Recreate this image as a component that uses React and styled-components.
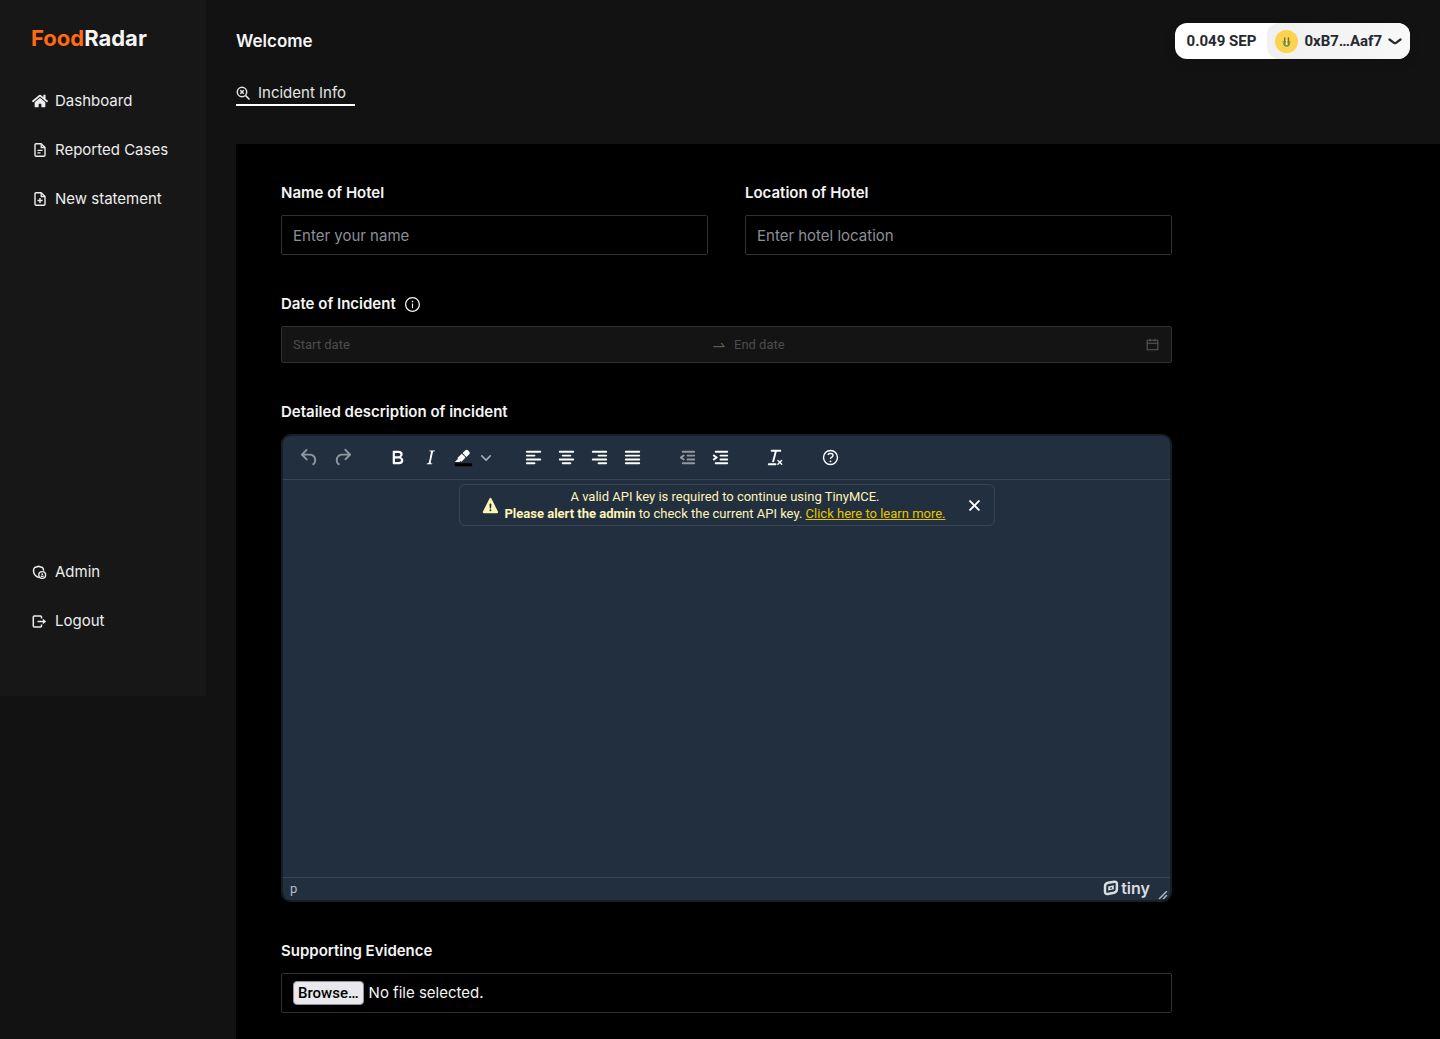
import React from "react";
import styled, { createGlobalStyle, css } from "styled-components";
import { FaHome } from "react-icons/fa";
import { AiOutlineInfoCircle, AiOutlineCalendar, AiOutlineSwapRight } from "react-icons/ai";

const GlobalStyle = createGlobalStyle`
  *, *::before, *::after { box-sizing: border-box; }
  body {
    margin: 0;
    background: #121212;
    color: #f5f5f5;
    font-family: Inter, "Liberation Sans", sans-serif;
    font-size: 15px;
    line-height: 24px;
  }
  button, input, textarea { font: inherit; color: inherit; }
  h1, h2, p { margin: 0; }
`;

const Page = styled.div`
  display: flex;
  align-items: flex-start;
  min-height: 100vh;
`;

const Sidebar = styled.aside`
  flex: 0 0 206px;
  display: flex;
  flex-direction: column;
  justify-content: space-between;
  height: 67vh;
  min-height: 480px;
  padding: 22px 31px 63px;
  background: #171717;
`;

const Brand = styled.h1`
  font-size: 22px;
  font-weight: 700;
  line-height: 32px;
  span { color: #ff6a13; }
`;

const Nav = styled.nav`
  display: flex;
  flex-direction: column;
  gap: 25px;
  margin-top: ${(p) => (p.$top ? "35px" : "0")};
`;

const NavLink = styled.a`
  display: flex;
  align-items: center;
  gap: 7px;
  color: #ededed;
  text-decoration: none;
  white-space: nowrap;
`;

const NavIcon = styled.span`
  flex: none;
  display: flex;
  justify-content: center;
  width: 17px;
`;

const Main = styled.main`
  flex: 1;
  min-width: 0;
  min-height: 100vh;
  display: flex;
  flex-direction: column;
  padding-left: 30px;
`;

const Header = styled.header`
  display: flex;
  justify-content: space-between;
  align-items: center;
  padding: 23px 30px 0 0;
`;

const Title = styled.h2`
  font-size: 17px;
  font-weight: 600;
  line-height: 24px;
`;

const Wallet = styled.button`
  display: flex;
  align-items: stretch;
  height: 36px;
  padding: 0;
  border: 0;
  border-radius: 12px;
  overflow: hidden;
  background: #fff;
  color: #25292e;
  font-family: Roboto, "Liberation Sans", sans-serif;
  font-size: 15px;
  font-weight: 700;
  box-shadow: 0 4px 12px rgba(0, 0, 0, 0.1);
`;

const Balance = styled.span`
  display: flex;
  align-items: center;
  padding: 0 11px 0 12px;
`;

const Account = styled.span`
  display: flex;
  align-items: center;
  gap: 6px;
  padding: 0 8px;
  border-radius: 12px;
  background: linear-gradient(90deg, #f0f0f1, #f8f8f8);
`;

const Tabs = styled.nav`
  display: flex;
  margin: 23px 0 38px;
`;

const Tab = styled.a`
  display: flex;
  align-items: center;
  gap: 7px;
  padding-right: 9px;
  border-bottom: 2px solid #fff;
  color: #e4e4e4;
  line-height: 22px;
  text-decoration: none;
`;

const Panel = styled.section`
  flex: 1;
  padding: 37px 45px 26px;
  background: #000;
`;

const Form = styled.form`
  display: flex;
  flex-direction: column;
  gap: 37px;
  max-width: 891px;
`;

const Pair = styled.div`
  display: grid;
  grid-template-columns: 1fr 1fr;
  gap: 37px;
`;

const Field = styled.div`
  display: flex;
  flex-direction: column;
  gap: 10px;
  min-width: 0;
`;

const Label = styled.label`
  display: flex;
  align-items: center;
  gap: 8px;
  font-weight: 600;
  svg { width: 17px; height: 17px; }
`;

const box = css`
  width: 100%;
  border: 1px solid #303030;
  border-radius: 2px;
`;

const TextInput = styled.input`
  ${box}
  height: 40px;
  padding: 0 11px;
  background: #000;
  outline: none;
  &::placeholder { color: #8b8f98; opacity: 1; }
`;

const DateRange = styled.div`
  ${box}
  display: flex;
  align-items: center;
  height: 37px;
  padding: 0 11px;
  background: #141414;
  color: #5a5a5a;
  font-family: Roboto, "Liberation Sans", sans-serif;
  font-size: 13px;
  svg { flex: none; }
`;

const DateInput = styled.input`
  flex: 1;
  min-width: 0;
  padding: 0;
  border: 0;
  background: transparent;
  outline: none;
  &::placeholder { color: #4c4c4c; opacity: 1; }
`;

const Arrow = styled.span`
  display: flex;
  padding: 0 7px;
`;

const Editor = styled.div`
  display: flex;
  flex-direction: column;
  height: 468px;
  border: 2px solid #161f29;
  border-radius: 10px;
  overflow: hidden;
  background: #222f3e;
  color: #fff;
  font-family: Roboto, "Liberation Sans", sans-serif;
  font-size: 13px;
`;

const Toolbar = styled.div`
  display: flex;
  align-items: center;
  gap: 22px;
  height: 44px;
  padding-left: 10px;
  border-bottom: 1px solid #3a4656;
`;

const Group = styled.div`
  display: flex;
  align-items: center;
`;

const Tool = styled.button`
  display: flex;
  align-items: center;
  justify-content: ${(p) => (p.$narrow ? "flex-start" : "center")};
  width: ${(p) => (p.$narrow ? "15px" : "33px")};
  height: 28px;
  padding: ${(p) => (p.$narrow ? "0 0 0 1px" : "0")};
  border: 0;
  background: transparent;
  color: #fff;
  &:disabled { color: rgba(255, 255, 255, 0.5); }
`;

const EditArea = styled.div`
  position: relative;
  flex: 1;
  display: flex;
`;

const TextArea = styled.textarea`
  flex: 1;
  padding: 60px 16px 16px;
  border: 0;
  resize: none;
  outline: none;
  background: transparent;
`;

const Notice = styled.div`
  position: absolute;
  top: 4px;
  left: 50%;
  transform: translateX(-50%);
  display: flex;
  align-items: center;
  gap: 3px;
  height: 42px;
  padding: 0 7px 0 19px;
  border: 1px solid #3a4656;
  border-radius: 6px;
  background: #222f3e;
  color: #fff5b8;
  line-height: 17px;
  text-align: center;
  white-space: nowrap;
  svg { flex: none; }
  a { color: #e6c700; }
`;

const NoticeClose = styled(Tool)`
  width: 25px;
  margin-left: 13px;
`;

const StatusBar = styled.div`
  display: flex;
  align-items: center;
  justify-content: space-between;
  height: 23px;
  padding: 0 2px 0 7px;
  border-top: 1px solid #3a4656;
  color: #b5bac1;
`;

const Branding = styled.span`
  display: flex;
  align-items: center;
  gap: 2px;
  padding-bottom: 2px;
  color: #d9dde2;
  font-family: Inter, "Liberation Sans", sans-serif;
  font-size: 16px;
  font-weight: 600;
  line-height: 20px;
`;

const Resize = styled.span`
  display: flex;
  align-self: flex-end;
  margin-left: 8px;
`;

const FileBox = styled.label`
  ${box}
  display: flex;
  align-items: center;
  gap: 5px;
  height: 40px;
  padding: 0 11px;
`;

const HiddenFile = styled.input`
  position: absolute;
  width: 1px;
  height: 1px;
  opacity: 0;
`;

const Browse = styled.span`
  padding: 0 4px;
  border: 1px solid #8f8f9d;
  border-radius: 4px;
  background: #e9e9ed;
  color: #000;
  font-family: Roboto, "Liberation Sans", sans-serif;
  font-weight: 500;
  line-height: 22px;
`;

const Glyph = ({ d, children }) => (
  <svg width="23" height="23" viewBox="0 0 24 24" fill="currentColor" aria-hidden="true">
    {d && <path fillRule="evenodd" d={d} />}
    {children}
  </svg>
);

const line = (x, y, w) => `M${x} ${y}h${w}a1 1 0 0 1 0 2H${x}a1 1 0 0 1 0-2Z`;

const icons = {
  undo: "M6.4 8H12c3.7 0 6.2 2 6.8 5.1.6 2.7-.4 5.6-2.3 6.8a1 1 0 0 1-1-1.8c1.1-.6 1.8-2.7 1.4-4.6-.5-2.1-2.1-3.5-4.9-3.5H6.4l3.3 3.3a1 1 0 1 1-1.4 1.4l-5-5a1 1 0 0 1 0-1.4l5-5a1 1 0 0 1 1.4 1.4L6.4 8Z",
  redo: "M17.6 10H12c-2.8 0-4.4 1.4-4.9 3.5-.4 2 .3 4 1.4 4.6a1 1 0 1 1-1 1.8c-2-1.2-2.9-4.1-2.3-6.8.6-3 3-5.1 6.8-5.1h5.6l-3.3-3.3a1 1 0 1 1 1.4-1.4l5 5a1 1 0 0 1 0 1.4l-5 5a1 1 0 0 1-1.4-1.4l3.3-3.3Z",
  bold: "M7.8 19c-.3 0-.5 0-.6-.2l-.2-.5V5.7c0-.2 0-.4.2-.5l.6-.2h5c1.5 0 2.7.3 3.5 1 .7.6 1.1 1.4 1.1 2.5a3 3 0 0 1-.6 1.9c-.4.6-1 1-1.6 1.2.4.1.9.3 1.3.6s.8.7 1 1.2c.4.4.5 1 .5 1.6 0 1.3-.4 2.3-1.3 3-.8.7-2.1 1-3.8 1H7.8Zm5-8.3c.6 0 1.2-.1 1.6-.5.4-.3.6-.7.6-1.3 0-1.1-.8-1.7-2.3-1.7H9.3v3.5h3.4Zm.5 6c.7 0 1.3-.1 1.7-.4.4-.4.6-.9.6-1.5s-.2-1-.7-1.4c-.4-.3-1-.4-2-.4H9.4v3.8h4Z",
  italic: "m16.7 4.7-.1.9h-.3c-.6 0-1 0-1.4.3-.3.3-.4.6-.5 1.1l-2.1 9.8v.6c0 .5.4.8 1.4.8h.2l-.2.8H8l.2-.8h.2c1.1 0 1.8-.5 2-1.5l2-9.8.1-.5c0-.6-.4-.8-1.4-.8h-.3l.2-.9h5.8Z",
  marker: "M7.7 16.7H3l3.3-3.3-.7-.8L10.2 8l4 4.1-4 4.2c-.2.2-.6.2-.8 0l-.6-.7-1.1 1.1Zm5-7.5L11 7.4l3-2.9a2 2 0 0 1 2.6 0L18 6c.7.7.7 2 0 2.7l-2.9 2.9-1.8-1.8-.5-.6Z",
  left: line(5, 5, 14) + line(5, 9, 8) + line(5, 13, 14) + line(5, 17, 8),
  center: line(5, 5, 14) + line(8, 9, 8) + line(5, 13, 14) + line(8, 17, 8),
  right: line(5, 5, 14) + line(11, 9, 8) + line(5, 13, 14) + line(11, 17, 8),
  justify: line(5, 5, 14) + line(5, 9, 14) + line(5, 13, 14) + line(5, 17, 14),
  outdent: line(7, 5, 12) + line(12, 9, 7) + line(12, 13, 7) + line(7, 17, 12) + "M8.6 13.2a1 1 0 0 1-1.2 1.6l-3-2a1 1 0 0 1 0-1.6l3-2a1 1 0 0 1 1.2 1.6L6.8 12l1.8 1.2Z",
  indent: line(7, 5, 12) + line(12, 9, 7) + line(12, 13, 7) + line(7, 17, 12) + "M4.4 13.2 6.2 12l-1.8-1.2a1 1 0 0 1 1.2-1.6l3 2a1 1 0 0 1 0 1.6l-3 2a1 1 0 1 1-1.2-1.6Z",
  clear: "M13.2 6a1 1 0 0 1 0 .2l-2.6 10a1 1 0 0 1-1 .8h-.2a.8.8 0 0 1-.8-1l2.6-10H8a1 1 0 1 1 0-2h9a1 1 0 0 1 0 2h-3.8ZM5 18h7a1 1 0 0 1 0 2H5a1 1 0 0 1 0-2Zm13 1.5L16.5 18 15 19.5a.7.7 0 0 1-1-1l1.5-1.5-1.5-1.5a.7.7 0 0 1 1-1l1.5 1.5 1.5-1.5a.7.7 0 0 1 1 1L17.5 17l1.5 1.5a.7.7 0 0 1-1 1Z",
  close: "M17.3 8.2 13.4 12l3.9 3.8a1 1 0 0 1-1.5 1.5L12 13.4l-3.8 3.9a1 1 0 0 1-1.5-1.5l3.9-3.8-3.9-3.8a1 1 0 0 1 1.5-1.5l3.8 3.9 3.8-3.9a1 1 0 0 1 1.5 1.5Z",
  warning: "M19.8 18.3c.2.5.3.9 0 1.2-.1.3-.5.5-1 .5H5.2c-.5 0-.9-.2-1-.5-.3-.3-.2-.7 0-1.2L11 4.7l.5-.5.5-.2c.2 0 .3 0 .5.2.2 0 .3.3.5.5l6.8 13.6ZM12 18c.3 0 .5-.1.7-.3.2-.2.3-.4.3-.7a1 1 0 0 0-.3-.7 1 1 0 0 0-.7-.3 1 1 0 0 0-.7.3 1 1 0 0 0-.3.7c0 .3.1.5.3.7.2.2.4.3.7.3Zm.7-3 .3-4a.8.8 0 0 0-.2-.7.8.8 0 0 0-.8-.3.8.8 0 0 0-.8.3.8.8 0 0 0-.2.7l.3 4h1.4Z",
};

const FileIcon = ({ children }) => (
  <svg width="12" height="14" viewBox="0 0 12 14" fill="none" stroke="currentColor" strokeLinejoin="round" aria-hidden="true">
    <path d="M7.2.8H2.2Q1 .8 1 2V12Q1 13.2 2.2 13.2H9.8Q11 13.2 11 12V4.5Z" strokeWidth="1.4" />
    <path d="M7.2 1V4.5H11" strokeWidth="1.3" />
    {children}
  </svg>
);

const AdminIcon = () => (
  <svg width="15" height="15" viewBox="0 0 15 15" fill="none" stroke="currentColor" aria-hidden="true">
    <path d="M6.8 12.6C3.5 11.3 1.5 8.800 1.500 5.800Q1.500 3.300 2.600 2.600Q4.500 2.200 6.500 1.300Q8.500 2.200 10.500 2.600Q11.600 3.300 11.600 5.800" strokeWidth="1.500" strokeLinejoin="round" />
    <circle cx="10.200" cy="10" r="3.400" strokeWidth="1.400" />
    <circle cx="10.200" cy="9.200" r="0.900" fill="currentColor" stroke="none" />
    <path d="M8.700 11.300h3" strokeWidth="1.300" />
  </svg>
);

const LogoutIcon = () => (
  <svg width="15" height="13" viewBox="0 0 15 13" fill="none" stroke="currentColor" aria-hidden="true">
    <path d="M9.500 3.600V2Q9.500 1 8.500 1H2.300Q1.300 1 1.300 2V11Q1.300 12 2.300 12H8.500Q9.500 12 9.500 11V9.400" strokeWidth="1.500" />
    <path d="M5.500 6.500h6" strokeWidth="1.500" />
    <path d="M10.800 3.800L14.200 6.500L10.800 9.200Z" fill="currentColor" stroke="none" />
  </svg>
);

const SearchIcon = () => (
  <svg width="15" height="15" viewBox="0 0 15 15" fill="none" stroke="currentColor" aria-hidden="true">
    <circle cx="6" cy="6" r="4.700" strokeWidth="1.500" />
    <path d="M9.500 9.500l4 4" strokeWidth="1.700" />
    <path d="M4.200 4.200l3.600 3.600M7.800 4.200L4.200 7.800" strokeWidth="1.200" />
    <circle cx="6" cy="6" r="1.400" fill="currentColor" stroke="none" />
  </svg>
);

const Avatar = () => (
  <svg width="23" height="23" viewBox="0 0 22 22" aria-hidden="true">
    <circle cx="11" cy="11" r="11" fill="#fcd34d" />
    <path d="M9.300 7.500v7M12.900 7.500v7" stroke="#7a6a34" strokeWidth="1.300" strokeLinecap="round" />
    <path d="M7.300 11.300h7.600" stroke="#7d8a3c" strokeWidth="1.300" />
    <path d="M8.300 12.500Q8.600 15 11.100 15.300Q13.600 15 13.900 12.500" fill="none" stroke="#5f9e5a" strokeWidth="1.300" />
    <path d="M11.100 9.500v4.500" stroke="#f3eeb0" strokeWidth="1" />
  </svg>
);

const TinyMark = () => (
  <svg width="16" height="16" viewBox="0 0 16 16" fill="none" stroke="currentColor" aria-hidden="true">
    <path d="M5 2.800L11.300 1.700Q13.900 1.500 13.900 4V9Q13.900 12 11 12.800L4.700 14Q2 14.300 2 11.800V6.500Q2 3.500 5 2.800Z" strokeWidth="2.500" />
    <path d="M5.200 6.500L10.800 5.300V9.300L5.200 10.500Z" fill="currentColor" stroke="none" />
    <path d="M7.200 7.600l1.800-.4v1.300l-1.800.4Z" fill="#222f3e" stroke="none" />
  </svg>
);

const T = ({ name, icon, disabled }) => (
  <Tool type="button" aria-label={name} disabled={disabled}>
    <Glyph d={icons[icon]} />
  </Tool>
);

const NavItem = ({ href, icon, children }) => (
  <NavLink href={href}>
    <NavIcon>{icon}</NavIcon>
    {children}
  </NavLink>
);

export default function App() {
  return (
    <>
      <GlobalStyle />
      <Page>
        <Sidebar>
          <div>
            <Brand><span>Food</span>Radar</Brand>
            <Nav $top>
              <NavItem href="#dashboard" icon={<FaHome size={16} />}>Dashboard</NavItem>
              <NavItem href="#cases" icon={<FileIcon><path d="M3.500 7.300h5M3.500 9.800h3" strokeWidth="1.200" /></FileIcon>}>Reported Cases</NavItem>
              <NavItem href="#new" icon={<FileIcon><path d="M3.500 8.500h5M6 6v5" strokeWidth="1.400" /></FileIcon>}>New statement</NavItem>
            </Nav>
          </div>
          <Nav>
            <NavItem href="#admin" icon={<AdminIcon />}>Admin</NavItem>
            <NavItem href="#logout" icon={<LogoutIcon />}>Logout</NavItem>
          </Nav>
        </Sidebar>
        <Main>
          <Header>
            <Title>Welcome</Title>
            <Wallet type="button">
              <Balance>0.049 SEP</Balance>
              <Account>
                <Avatar />
                0xB7…Aaf7
                <svg width="14" height="7" viewBox="0 0 14 7" fill="none" stroke="#25292e" strokeWidth="2.200" strokeLinecap="round" aria-hidden="true">
                  <path d="M1.500 1.500L6 4.800Q7 5.500 8 4.800L12.500 1.500" />
                </svg>
              </Account>
            </Wallet>
          </Header>
          <Tabs>
            <Tab href="#incident"><SearchIcon />Incident Info</Tab>
          </Tabs>
          <Panel>
            <Form>
              <Pair>
                <Field>
                  <Label htmlFor="name">Name of Hotel</Label>
                  <TextInput id="name" placeholder="Enter your name" />
                </Field>
                <Field>
                  <Label htmlFor="location">Location of Hotel</Label>
                  <TextInput id="location" placeholder="Enter hotel location" />
                </Field>
              </Pair>
              <Field>
                <Label htmlFor="start">Date of Incident <AiOutlineInfoCircle /></Label>
                <DateRange>
                  <DateInput id="start" placeholder="Start date" />
                  <Arrow><AiOutlineSwapRight size={16} /></Arrow>
                  <DateInput aria-label="End date" placeholder="End date" />
                  <AiOutlineCalendar size={15} />
                </DateRange>
              </Field>
              <Field>
                <Label htmlFor="description">Detailed description of incident</Label>
                <Editor>
                  <Toolbar>
                    <Group>
                      <T name="Undo" icon="undo" disabled />
                      <T name="Redo" icon="redo" disabled />
                    </Group>
                    <Group>
                      <T name="Bold" icon="bold" />
                      <T name="Italic" icon="italic" />
                      <Tool type="button" aria-label="Background color">
                        <Glyph d={icons.marker}><path d="M3 18h18v3H3z" fill="#000" /></Glyph>
                      </Tool>
                      <Tool type="button" $narrow aria-label="Choose background color">
                        <svg width="10" height="10" viewBox="0 0 10 10" fill="currentColor" opacity="0.6" aria-hidden="true">
                          <path d="M8.700 2.200c.3-.3.8-.3 1 0 .4.400.4.900 0 1.200L5.700 7.800c-.3.300-.9.300-1.200 0L.2 3.400a.8.8 0 0 1 0-1.200c.3-.3.8-.3 1.100 0L5 6l3.700-3.800Z" />
                        </svg>
                      </Tool>
                    </Group>
                    <Group>
                      <T name="Align left" icon="left" />
                      <T name="Align center" icon="center" />
                      <T name="Align right" icon="right" />
                      <T name="Justify" icon="justify" />
                    </Group>
                    <Group>
                      <T name="Decrease indent" icon="outdent" disabled />
                      <T name="Increase indent" icon="indent" />
                    </Group>
                    <Group><T name="Clear formatting" icon="clear" /></Group>
                    <Group>
                      <Tool type="button" aria-label="Help">
                        <Glyph>
                          <circle cx="12" cy="12" r="7.300" fill="none" stroke="currentColor" strokeWidth="1.500" />
                          <path d="M9.600 9.700a.7.7 0 0 1-.7-.8c0-1.100 1.500-1.800 3.200-1.800 1.800 0 3.200.8 3.200 2.400 0 1.400-.4 2.100-1.500 2.800-.2 0-.3.1-.3.2a2 2 0 0 0-.8.8.8.8 0 0 1-1.400-.6c.3-.7.8-1 1.300-1.500l.4-.2c.7-.4.8-.6.8-1.500 0-.5-.6-.9-1.700-.9-.5 0-1 .1-1.400.3-.2 0-.3.1-.3.2v-.2c0 .4-.4.8-.8.8Z" />
                          <circle cx="12" cy="16" r="1" />
                        </Glyph>
                      </Tool>
                    </Group>
                  </Toolbar>
                  <EditArea>
                    <TextArea id="description" />
                    <Notice role="alert">
                      <Glyph d={icons.warning} />
                      <p>
                        A valid API key is required to continue using TinyMCE.<br />
                        <strong>Please alert the admin</strong> to check the current API key. <a href="#learn">Click here to learn more.</a>
                      </p>
                      <NoticeClose type="button" aria-label="Close"><Glyph d={icons.close} /></NoticeClose>
                    </Notice>
                  </EditArea>
                  <StatusBar>
                    <span>p</span>
                    <Group>
                      <Branding><TinyMark />tiny</Branding>
                      <Resize>
                        <svg width="10" height="10" viewBox="0 0 10 10" fill="currentColor" aria-hidden="true">
                          <path d="M8.100 1.100A.5.5 0 1 1 9 2l-7 7A.5.5 0 1 1 1 8l7-7ZM8.100 5.100A.5.5 0 1 1 9 6l-3 3A.5.5 0 1 1 5 8l3-3Z" />
                        </svg>
                      </Resize>
                    </Group>
                  </StatusBar>
                </Editor>
              </Field>
              <Field>
                <Label htmlFor="evidence">Supporting Evidence</Label>
                <FileBox>
                  <HiddenFile id="evidence" type="file" />
                  <Browse>Browse…</Browse>
                  No file selected.
                </FileBox>
              </Field>
            </Form>
          </Panel>
        </Main>
      </Page>
    </>
  );
}
